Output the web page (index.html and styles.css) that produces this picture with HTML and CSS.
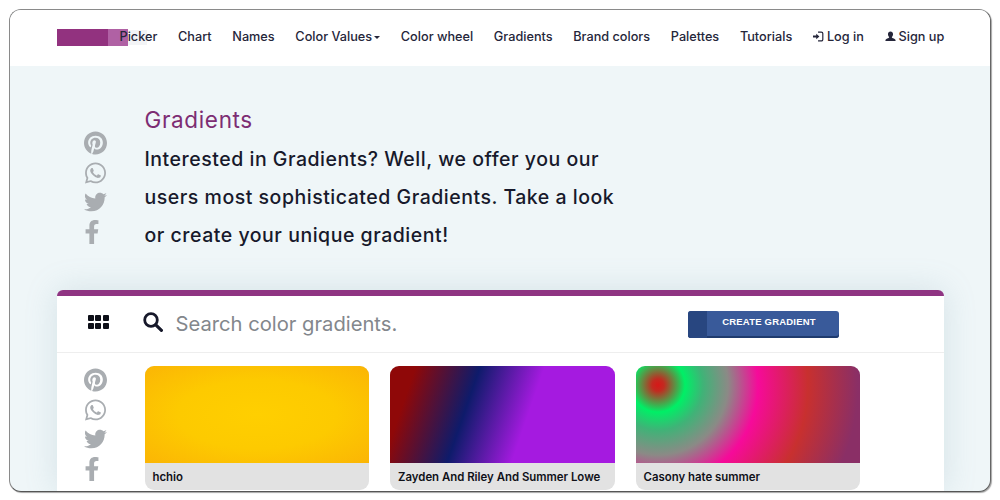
FILE: index.html
```html
<!DOCTYPE html>
<html lang="en">
<head>
<meta charset="utf-8">
<title>Gradients</title>
<link rel="stylesheet" href="styles.css">
</head>
<body>
<svg class="defs" width="0" height="0" aria-hidden="true">
  <symbol id="i-pin" viewBox="0 0 496 512"><path d="M496 256c0 137-111 248-248 248-25.6 0-50.2-3.9-73.4-11.1 10.1-16.5 25.2-43.5 30.8-65 3-11.6 15.4-59 15.4-59 8.1 15.4 31.7 28.5 56.8 28.5 74.8 0 128.7-68.8 128.7-154.3 0-81.9-66.9-143.2-152.9-143.2-107 0-163.9 71.8-163.9 150.1 0 36.4 19.4 81.7 50.3 96.1 4.7 2.2 7.2 1.2 8.3-3.3.8-3.4 5-20.3 6.9-28.1.6-2.5.3-4.7-1.7-7.1-10.1-12.5-18.3-35.3-18.3-56.6 0-54.7 41.4-107.6 112-107.6 60.9 0 103.6 41.5 103.6 100.9 0 67.1-33.9 113.6-78 113.6-24.3 0-42.6-20.1-36.7-44.8 7-29.5 20.5-61.3 20.5-82.6 0-19-10.2-34.9-31.4-34.9-24.9 0-44.9 25.7-44.9 60.2 0 22 7.4 36.8 7.4 36.8s-24.5 103.8-29 123.2c-5 21.4-3 51.6-.9 71.2C65.4 450.9 0 361.1 0 256 0 119 111 8 248 8s248 111 248 248z"/></symbol>
  <symbol id="i-wa" viewBox="0 0 448 512"><path d="M380.9 97.1C339 55.1 283.2 32 223.9 32c-122.4 0-222 99.6-222 222 0 39.1 10.2 77.3 29.6 111L0 480l117.7-30.9c32.4 17.7 68.9 27 106.1 27h.1c122.3 0 224.1-99.6 224.1-222 0-59.3-25.2-115-67.1-157zm-157 341.6c-33.2 0-65.7-8.9-94-25.7l-6.7-4-69.8 18.3L72 359.2l-4.4-7c-18.5-29.4-28.2-63.3-28.2-98.2 0-101.7 82.8-184.5 184.6-184.5 49.3 0 95.6 19.2 130.4 54.1 34.8 34.9 56.2 81.2 56.1 130.5 0 101.8-84.9 184.6-186.6 184.6zm101.2-138.2c-5.5-2.8-32.8-16.2-37.9-18-5.1-1.9-8.8-2.8-12.5 2.8-3.7 5.6-14.3 18-17.6 21.8-3.2 3.7-6.5 4.2-12 1.4-32.6-16.3-54-29.1-75.5-66-5.7-9.8 5.7-9.1 16.3-30.3 1.8-3.7.9-6.9-.5-9.7-1.4-2.8-12.5-30.1-17.1-41.2-4.5-10.8-9.1-9.3-12.5-9.5-3.2-.2-6.9-.2-10.6-.2-3.7 0-9.7 1.4-14.8 6.9-5.1 5.6-19.4 19-19.4 46.3 0 27.3 19.9 53.7 22.6 57.4 2.8 3.7 39.1 59.7 94.8 83.8 35.2 15.2 49 16.5 66.6 13.9 10.7-1.6 32.8-13.4 37.4-26.4 4.6-13 4.6-24.1 3.2-26.4-1.3-2.5-5-3.9-10.5-6.6z"/></symbol>
  <symbol id="i-tw" viewBox="0 0 512 512"><path d="M459.37 151.716c.325 4.548.325 9.097.325 13.645 0 138.72-105.583 298.558-298.558 298.558-59.452 0-114.68-17.219-161.137-47.106 8.447.974 16.568 1.299 25.34 1.299 49.055 0 94.213-16.568 130.274-44.832-46.132-.975-84.792-31.188-98.112-72.772 6.498.974 12.995 1.624 19.818 1.624 9.421 0 18.843-1.3 27.614-3.573-48.081-9.747-84.143-51.98-84.143-102.985v-1.299c13.969 7.797 30.214 12.67 47.431 13.319-28.264-18.843-46.781-51.005-46.781-87.391 0-19.492 5.197-37.36 14.294-52.954 51.655 63.675 129.3 105.258 216.365 109.807-1.624-7.797-2.599-15.918-2.599-24.04 0-57.828 46.782-104.934 104.934-104.934 30.213 0 57.502 12.67 76.67 33.137 23.715-4.548 46.456-13.32 66.599-25.34-7.798 24.366-24.366 44.833-46.132 57.827 21.117-2.273 41.584-8.122 60.426-16.243-14.292 20.791-32.161 39.308-52.628 54.253z"/></symbol>
  <symbol id="i-fb" viewBox="0 0 320 512"><path d="M279.14 288l14.22-92.66h-88.91v-60.13c0-25.35 12.42-50.06 52.24-50.06h40.42V6.26S260.43 0 225.36 0c-73.22 0-121.08 44.38-121.08 124.72v70.62H22.89V288h81.39v224h100.17V288z"/></symbol>
</svg>
<div class="frame">
  <header class="nav">
    <div class="logo"><span class="logo-a"></span><span class="logo-b"></span><span class="logo-c"></span></div>
    <a class="nav-link">Picker</a>
    <a class="nav-link">Chart</a>
    <a class="nav-link">Names</a>
    <a class="nav-link">Color Values<span class="caret"></span></a>
    <a class="nav-link">Color wheel</a>
    <a class="nav-link">Gradients</a>
    <a class="nav-link">Brand colors</a>
    <a class="nav-link">Palettes</a>
    <a class="nav-link">Tutorials</a>
    <a class="nav-link nav-icon">
      <svg class="glyph" viewBox="0 0 12 12"><path d="M0 5h3.5V3L7 6 3.5 9V7H0z"/><path d="M5.5 1.2h3.6a1.6 1.6 0 0 1 1.6 1.6v6.4a1.6 1.6 0 0 1-1.6 1.6H5.5" fill="none" stroke="currentColor" stroke-width="1.3"/></svg>
      Log in</a>
    <a class="nav-link nav-icon">
      <svg class="glyph" viewBox="0 0 12 12"><path d="M6 .5c1.700 0 2.800 1.300 2.800 3.100 0 1.300-.6 2.400-1.300 3 0 .8.300 1 1.200 1.400 1.300.5 2.500 1 2.800 1.900V11H.5V9.900c.3-.9 1.500-1.400 2.800-1.900.9-.4 1.200-.6 1.200-1.400-.7-.6-1.300-1.700-1.300-3C3.200 1.800 4.300.5 6 .5z"/></svg>
      Sign up</a>
  </header>
  <main class="page">
    <section class="hero">
      <div class="social">
        <svg class="soc"><use href="#i-pin"/></svg>
        <svg class="soc"><use href="#i-wa"/></svg>
        <svg class="soc"><use href="#i-tw"/></svg>
        <svg class="soc soc-f"><use href="#i-fb"/></svg>
      </div>
      <div class="intro">
        <h1 class="title">Gradients</h1>
        <p class="lead">Interested in Gradients? Well, we offer you our<br>users most sophisticated Gradients. Take a look<br>or create your unique gradient!</p>
      </div>
    </section>
    <section class="panel">
      <div class="toolbar">
        <div class="grid-icon"><i></i><i></i><i></i><i></i><i></i><i></i></div>
        <svg class="search-icon" viewBox="0 0 20 20"><circle cx="8" cy="8" r="6.300" fill="none" stroke="currentColor" stroke-width="2.800"/><path d="M12.800 12.800l5.600 5.600" stroke="currentColor" stroke-width="3.200" stroke-linecap="round"/></svg>
        <span class="search-text">Search color gradients.</span>
        <button class="create"><span class="create-side"></span><span class="create-label">CREATE GRADIENT</span></button>
      </div>
      <div class="content">
        <div class="social social-in">
          <svg class="soc"><use href="#i-pin"/></svg>
          <svg class="soc"><use href="#i-wa"/></svg>
          <svg class="soc"><use href="#i-tw"/></svg>
          <svg class="soc soc-f"><use href="#i-fb"/></svg>
        </div>
        <div class="cards">
          <article class="card"><div class="swatch sw-1"></div><div class="cap">hchio</div></article>
          <article class="card"><div class="swatch sw-2"></div><div class="cap">Zayden And Riley And Summer Lowe</div></article>
          <article class="card"><div class="swatch sw-3"></div><div class="cap">Casony hate summer</div></article>
        </div>
      </div>
    </section>
  </main>
</div>
</body>
</html>
```

FILE: styles.css
```css
* { box-sizing: border-box; }
html, body { margin: 0; height: 500px; overflow: hidden; background: #fff; }
body { padding: 9px 8px 8px 9px; font-family: "Inter", "Lato", "Liberation Sans", sans-serif; color: #17192b; }
.defs { position: absolute; }
.frame {
  width: 982px; height: 483px; overflow: hidden;
  border: 1.5px solid #8a8a8a; border-bottom-color: #555; border-right-color: #666;
  border-radius: 12px; background: #eff6f8;
  box-shadow: 1px 1px 1px rgba(0,0,0,.35);
  display: flex; flex-direction: column;
}
.nav {
  position: relative; flex: none; height: 56px; background: #fff;
  display: flex; align-items: center; gap: 20.700px; padding: 0 0 4px 109.500px;
  font-size: 12.700px; font-weight: 500; color: #25263a;
}
.nav-link { position: relative; white-space: nowrap; display: flex; align-items: center; }
.nav-icon { gap: 3px; }
.logo { position: absolute; left: 46.500px; top: 19px; height: 17px; width: 90px; display: flex; }
.logo-a { width: 51px; background: #92327f; }
.logo-b { width: 20px; background: #b061a4; }
.logo-c { width: 19px; background: #eef0f2; opacity: .7; margin: 1px 0; }
.caret { width: 0; height: 0; margin: 2px 0 0 2px; border: 3px solid transparent; border-top-color: #25263a; border-bottom: 0; }
.glyph { width: 11px; height: 11px; fill: currentColor; }
.page { flex: 1; min-height: 0; padding: 0 46.500px; display: flex; flex-direction: column; }
.hero { flex: none; height: 224px; display: flex; }
.social { width: 88px; flex: none; padding: 65px 0 0 27px; display: flex; flex-direction: column; gap: 5.500px; }
.social-in { padding-top: 15px; }
.soc { width: 23px; height: 24px; fill: #a9adb1; display: block; }
.soc-f { width: 16px; }
.intro { padding-top: 41px; }
.title { margin: 0; font-size: 22.500px; line-height: 26px; font-weight: 400; color: #7d2d73; letter-spacing: .65px; }
.lead { margin: 7px 0 0; font-size: 19.500px; line-height: 38px; font-weight: 450; letter-spacing: .52px; color: #17192b; }
.panel { flex: 1; min-height: 0; background: #fff; border-top: 6px solid #8f3482; border-radius: 6px 6px 0 0; box-shadow: 0 0 32px rgba(120,160,175,.22); }
.toolbar { height: 57px; border-bottom: 1px solid #eeeeee; display: flex; align-items: center; padding: 0 0 4px 31px; }
.grid-icon { display: grid; grid-template-columns: repeat(3, 6px); grid-auto-rows: 6px; gap: 1.500px; }
.grid-icon i { background: #0d0f18; border-radius: 1px; }
.search-icon { width: 20px; height: 20px; margin-left: 34px; color: #17192b; flex: none; }
.search-text { margin: 2px 0 0 13px; font-size: 20.200px; color: #83878c; font-weight: 400; width: 512px; flex: none; }
.create { width: 151px; height: 27px; margin-top: 4px; padding: 0; border: 0; border-radius: 3px; background: #395a9a; display: flex; font-family: "Liberation Sans", sans-serif; box-shadow: inset 0 -2px 0 #1f3b6e; }
.create-side { width: 19px; height: 100%; background: #284680; border-radius: 3px 0 0 3px; }
.create-label { flex: 1; padding-top: 5px; font-size: 9.500px; font-weight: 700; color: #fff; line-height: 12px; text-align: center; padding-right: 7px; letter-spacing: .2px; }
.content { display: flex; }
.cards { padding-top: 13px; display: flex; gap: 21px; }
.card { width: 224.500px; height: 124px; border-radius: 9px; overflow: hidden; background: #e2e2e2; }
.swatch { height: 97px; }
.sw-1 { background: radial-gradient(ellipse at center, #ffcf00 0%, #fdca00 50%, #fbb505 100%); }
.sw-2 { background: linear-gradient(109deg, #8f0808 10%, #0e1b6b 35%, #a51ae0 60%, #a51ae0 100%); }
.sw-3 { background: radial-gradient(circle at 22px 19px, #d61818 0, #c22a20 6px, #00ef66 27px, #3fb377 45px, #8b8a86 70px, #f60a9a 100px, #c8302f 150px, #8a2f66 200px); }
.cap { padding: 0 8px; height: 27px; font-size: 11.400px; line-height: 28px; font-weight: 600; color: #101118; white-space: nowrap; }
```
